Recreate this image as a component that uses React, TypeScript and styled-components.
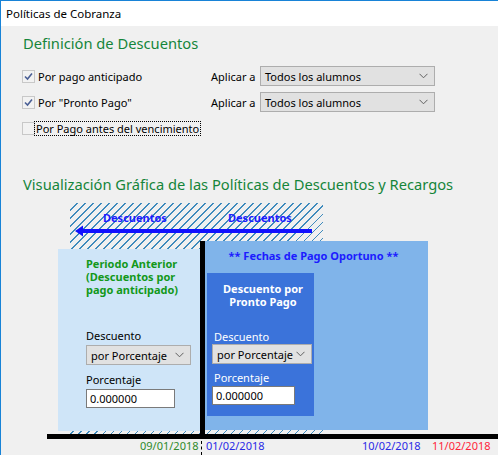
import styled, { createGlobalStyle } from "styled-components";

const GlobalStyle = createGlobalStyle`
  html, body {
    margin: 0;
    padding: 0;
    background: #f0f0f0;
  }
  body {
    font-family: "Noto Sans", "Open Sans", sans-serif;
    font-size: 11px;
    color: #000;
  }
  * {
    box-sizing: border-box;
  }
`;

const Window = styled.div`
  width: 498px;
  height: 455px;
  border-top: 1px solid #1883d7;
  border-left: 1px solid #1883d7;
  background: #f0f0f0;
  overflow: hidden;
  display: flex;
  flex-direction: column;
`;

const TitleBar = styled.div`
  height: 25px;
  flex: none;
  background: #ffffff;
  padding-left: 5px;
  display: flex;
  align-items: center;
  font-size: 11.5px;
`;

const Section = styled.div`
  padding-left: 22px;
`;

const Heading = styled.h2<{ $top: number }>`
  margin: ${(p) => p.$top}px 0 0 0;
  height: 22px;
  line-height: 22px;
  font-size: 14.7px;
  font-weight: 400;
  color: #15853a;
`;

const Rows = styled.div`
  margin-top: 12px;
  display: flex;
  flex-direction: column;
  gap: 6px;
`;

const Row = styled.div`
  display: grid;
  grid-template-columns: 188px 49px 175px;
  align-items: center;
  height: 20px;
`;

const CheckLabel = styled.label`
  display: flex;
  align-items: center;
  margin-left: -1px;
`;

const Box = styled.span`
  width: 13px;
  height: 13px;
  border: 1px solid #c8c8c8;
  background: #f2f2f2;
  display: inline-flex;
  align-items: center;
  justify-content: center;
  flex: none;
`;

const LabelText = styled.span<{ $focus?: boolean }>`
  margin-left: ${(p) => (p.$focus ? "-1px" : "1px")};
  padding: 0 1px;
  line-height: 13px;
  border: ${(p) => (p.$focus ? "1px dotted #000" : "1px solid transparent")};
  white-space: nowrap;
`;

const Apply = styled.span`
  white-space: nowrap;
`;

const Select = styled.div<{ $w: number }>`
  width: ${(p) => p.$w}px;
  height: 20px;
  border: 1px solid #adadad;
  background: #e1e1e1;
  display: flex;
  align-items: center;
  justify-content: space-between;
  padding: 0 6px 0 4px;
  white-space: nowrap;
  color: #000;
  font-weight: 400;
`;

const Input = styled.div<{ $w: number }>`
  width: ${(p) => p.$w}px;
  height: 19px;
  border: 1px solid #7a7a7a;
  background: #fff;
  display: flex;
  align-items: center;
  padding-left: 3px;
  color: #000;
`;

const Diagram = styled.div`
  position: relative;
  margin-top: 8px;
  height: 252px;
  flex: none;
`;

const Hatch = styled.div`
  position: absolute;
  left: 69px;
  top: 0;
  width: 253px;
  height: 232px;
  background: repeating-linear-gradient(
    135deg,
    transparent 0 4.85px,
    #3f8bbd 4.85px 5.66px
  );
`;

const FlowLabel = styled.span<{ $x: number }>`
  position: absolute;
  left: ${(p) => p.$x}px;
  top: 8px;
  line-height: 14px;
  font-weight: 700;
  color: #1c1cff;
`;

const Arrow = styled.svg`
  position: absolute;
  left: 73px;
  top: 20px;
`;

const LeftPanel = styled.div`
  position: absolute;
  left: 57px;
  top: 46px;
  width: 142px;
  height: 182px;
  background: #cfe5f8;
  padding: 8px 0 0 28px;
  display: flex;
  flex-direction: column;
  align-items: flex-start;
`;

const PanelTitle = styled.div<{ $color: string; $center?: boolean }>`
  font-weight: 700;
  line-height: 13px;
  color: ${(p) => p.$color};
  text-align: ${(p) => (p.$center ? "center" : "left")};
  align-self: ${(p) => (p.$center ? "stretch" : "auto")};
`;

const FieldLabel = styled.div<{ $top: number; $color: string; $indent?: number }>`
  margin-top: ${(p) => p.$top}px;
  margin-left: ${(p) => p.$indent ?? 0}px;
  line-height: 14px;
  color: ${(p) => p.$color};
`;

const Gap = styled.div<{ $h: number }>`
  height: ${(p) => p.$h}px;
`;

const MidPanel = styled.div`
  position: absolute;
  left: 204px;
  top: 38px;
  width: 223px;
  height: 189px;
  background: #80b4ea;
  padding-top: 8px;
  display: flex;
  flex-direction: column;
`;

const MidTitle = styled.div`
  line-height: 14px;
  font-weight: 700;
  color: #1c1cff;
  text-align: center;
  padding-right: 6px;
`;

const DarkPanel = styled.div`
  margin: 10px 0 0 2px;
  width: 107px;
  height: 143px;
  background: #3b73da;
  padding: 9px 0 0 5px;
  display: flex;
  flex-direction: column;
  align-items: flex-start;
`;

const VBar = styled.div`
  position: absolute;
  left: 199px;
  top: 38px;
  width: 5px;
  height: 198px;
  background: #000;
`;

const HBar = styled.div`
  position: absolute;
  left: 46px;
  top: 231px;
  width: 452px;
  height: 5px;
  background: #000;
`;

const Tick = styled.div`
  position: absolute;
  left: 200px;
  top: 238px;
  height: 14px;
  border-left: 1px dashed #000;
`;

const DateLabel = styled.span<{ $x: number; $color: string }>`
  position: absolute;
  left: ${(p) => p.$x}px;
  top: 236px;
  line-height: 14px;
  color: ${(p) => p.$color};
`;

const Check = () => (
  <svg width="9" height="9" viewBox="0 0 9 9">
    <path d="M1 4.5 L3.5 7 L8 1.5" fill="none" stroke="#4a5f95" strokeWidth="1.6" />
  </svg>
);

const Chevron = () => (
  <svg width="9" height="6" viewBox="0 0 9 6">
    <path d="M0.5 0.8 L4.5 4.8 L8.5 0.8" fill="none" stroke="#606060" strokeWidth="1" />
  </svg>
);

const rows = [
  { label: "Por pago anticipado", checked: true, apply: true },
  { label: 'Por "Pronto Pago"', checked: true, apply: true },
  { label: "Por Pago antes del vencimiento", checked: false, apply: false },
];

export default function App() {
  return (
    <>
      <GlobalStyle />
      <Window>
        <TitleBar>Políticas de Cobranza</TitleBar>
        <Section>
          <Heading $top={6}>Definición de Descuentos</Heading>
          <Rows>
            {rows.map((r) => (
              <Row key={r.label}>
                <CheckLabel>
                  <Box>{r.checked && <Check />}</Box>
                  <LabelText $focus={!r.apply}>{r.label}</LabelText>
                </CheckLabel>
                {r.apply && <Apply>Aplicar a</Apply>}
                {r.apply && (
                  <Select $w={175}>
                    Todos los alumnos
                    <Chevron />
                  </Select>
                )}
              </Row>
            ))}
          </Rows>
          <Heading $top={35}>
            Visualización Gráfica de las Políticas de Descuentos y Recargos
          </Heading>
        </Section>
        <Diagram>
          <Hatch />
          <FlowLabel $x={102}>Descuentos</FlowLabel>
          <FlowLabel $x={227}>Descuentos</FlowLabel>
          <Arrow width="240" height="16" viewBox="0 0 240 16">
            <line x1="4" y1="8" x2="238" y2="8" stroke="#1010ff" strokeWidth="4" />
            <polygon points="1,8 9,2.5 9,13.5" fill="#1010ff" />
          </Arrow>
          <LeftPanel>
            <PanelTitle $color="#13981a">
              Periodo Anterior
              <br />
              (Descuentos por
              <br />
              pago anticipado)
            </PanelTitle>
            <FieldLabel $top={33} $color="#000">
              Descuento
            </FieldLabel>
            <Gap $h={2} />
            <Select $w={105}>
              por Porcentaje
              <Chevron />
            </Select>
            <FieldLabel $top={8} $color="#000">
              Porcentaje
            </FieldLabel>
            <Gap $h={2} />
            <Input $w={89}>0.000000</Input>
          </LeftPanel>
          <MidPanel>
            <MidTitle>** Fechas de Pago Oportuno **</MidTitle>
            <DarkPanel>
              <PanelTitle $color="#ffffff" $center>
                Descuento por
                <br />
                Pronto Pago
              </PanelTitle>
              <FieldLabel $top={22} $color="#ffffff" $indent={2}>
                Descuento
              </FieldLabel>
              <Select $w={100}>
                por Porcentaje
                <Chevron />
              </Select>
              <FieldLabel $top={7} $color="#ffffff" $indent={2}>
                Porcentaje
              </FieldLabel>
              <Gap $h={1} />
              <Input $w={83}>0.000000</Input>
            </DarkPanel>
          </MidPanel>
          <VBar />
          <HBar />
          <Tick />
          <DateLabel $x={139} $color="#2f8a2a">
            09/01/2018
          </DateLabel>
          <DateLabel $x={205} $color="#2a2ae6">
            01/02/2018
          </DateLabel>
          <DateLabel $x={361} $color="#2a2ae6">
            10/02/2018
          </DateLabel>
          <DateLabel $x={431} $color="#ff1f3a">
            11/02/2018
          </DateLabel>
        </Diagram>
      </Window>
    </>
  );
}
